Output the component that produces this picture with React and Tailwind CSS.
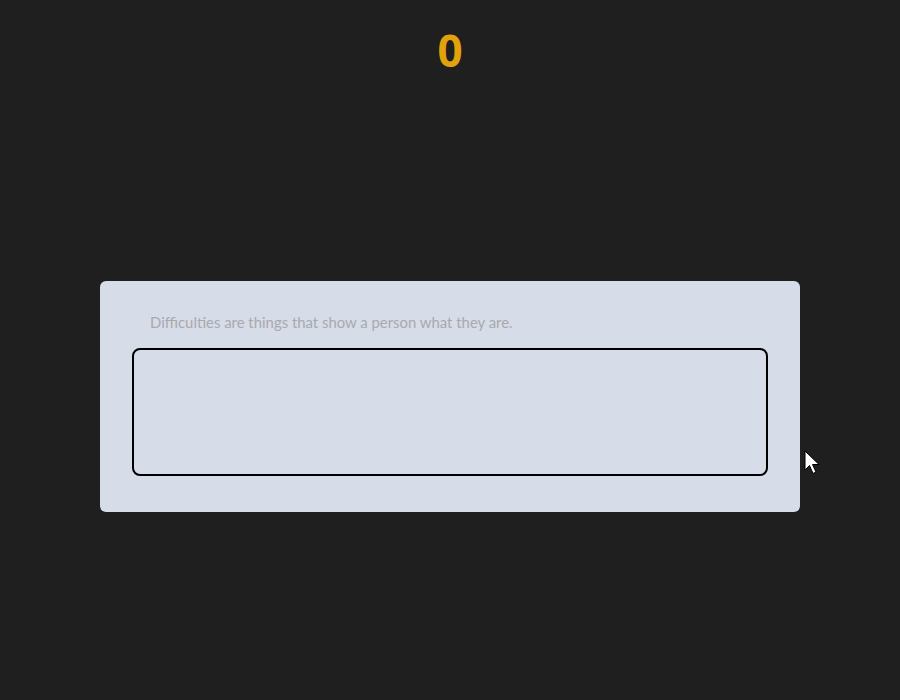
import React, { useState } from "react";

const quote = "Difficulties are things that show a person what they are.";

const App = () => {
  const [typed, setTyped] = useState("");

  return (
    <div className="relative min-h-[700px] w-full bg-[#1f1f1f] flex flex-col items-center">
      {/* score */}
      <div className="pt-[24px] h-[281px] text-[44px] leading-[52px] font-bold text-[#e2a20b] font-['Open_Sans',sans-serif]">
        0
      </div>

      {/* typing card */}
      <div className="w-[700px] rounded-[6px] bg-[#d6dce8] px-[32px] pt-[30px] pb-[36px]">
        <p className="pl-[18px] mb-[15px] text-[14.9px] leading-[22px] text-[#a9a9ad] font-['Lato',sans-serif]">
          {quote}
        </p>
        <textarea
          value={typed}
          onChange={(e) => setTyped(e.target.value)}
          className="block w-full h-[128px] resize-none rounded-[8px] border-2 border-black bg-transparent outline-none"
        />
      </div>

      {/* mouse pointer */}
      <svg
        className="absolute left-[804px] top-[450px]"
        width="18"
        height="26"
        viewBox="0 0 18 26"
      >
        <path
          d="M1 1 L1 20 L5.5 15.5 L9 23.5 L12 22 L8.5 14.5 L15 14.5 Z"
          fill="#ffffff"
          stroke="#000000"
          strokeWidth="1"
          strokeLinejoin="round"
        />
      </svg>
    </div>
  );
};

export default App;
